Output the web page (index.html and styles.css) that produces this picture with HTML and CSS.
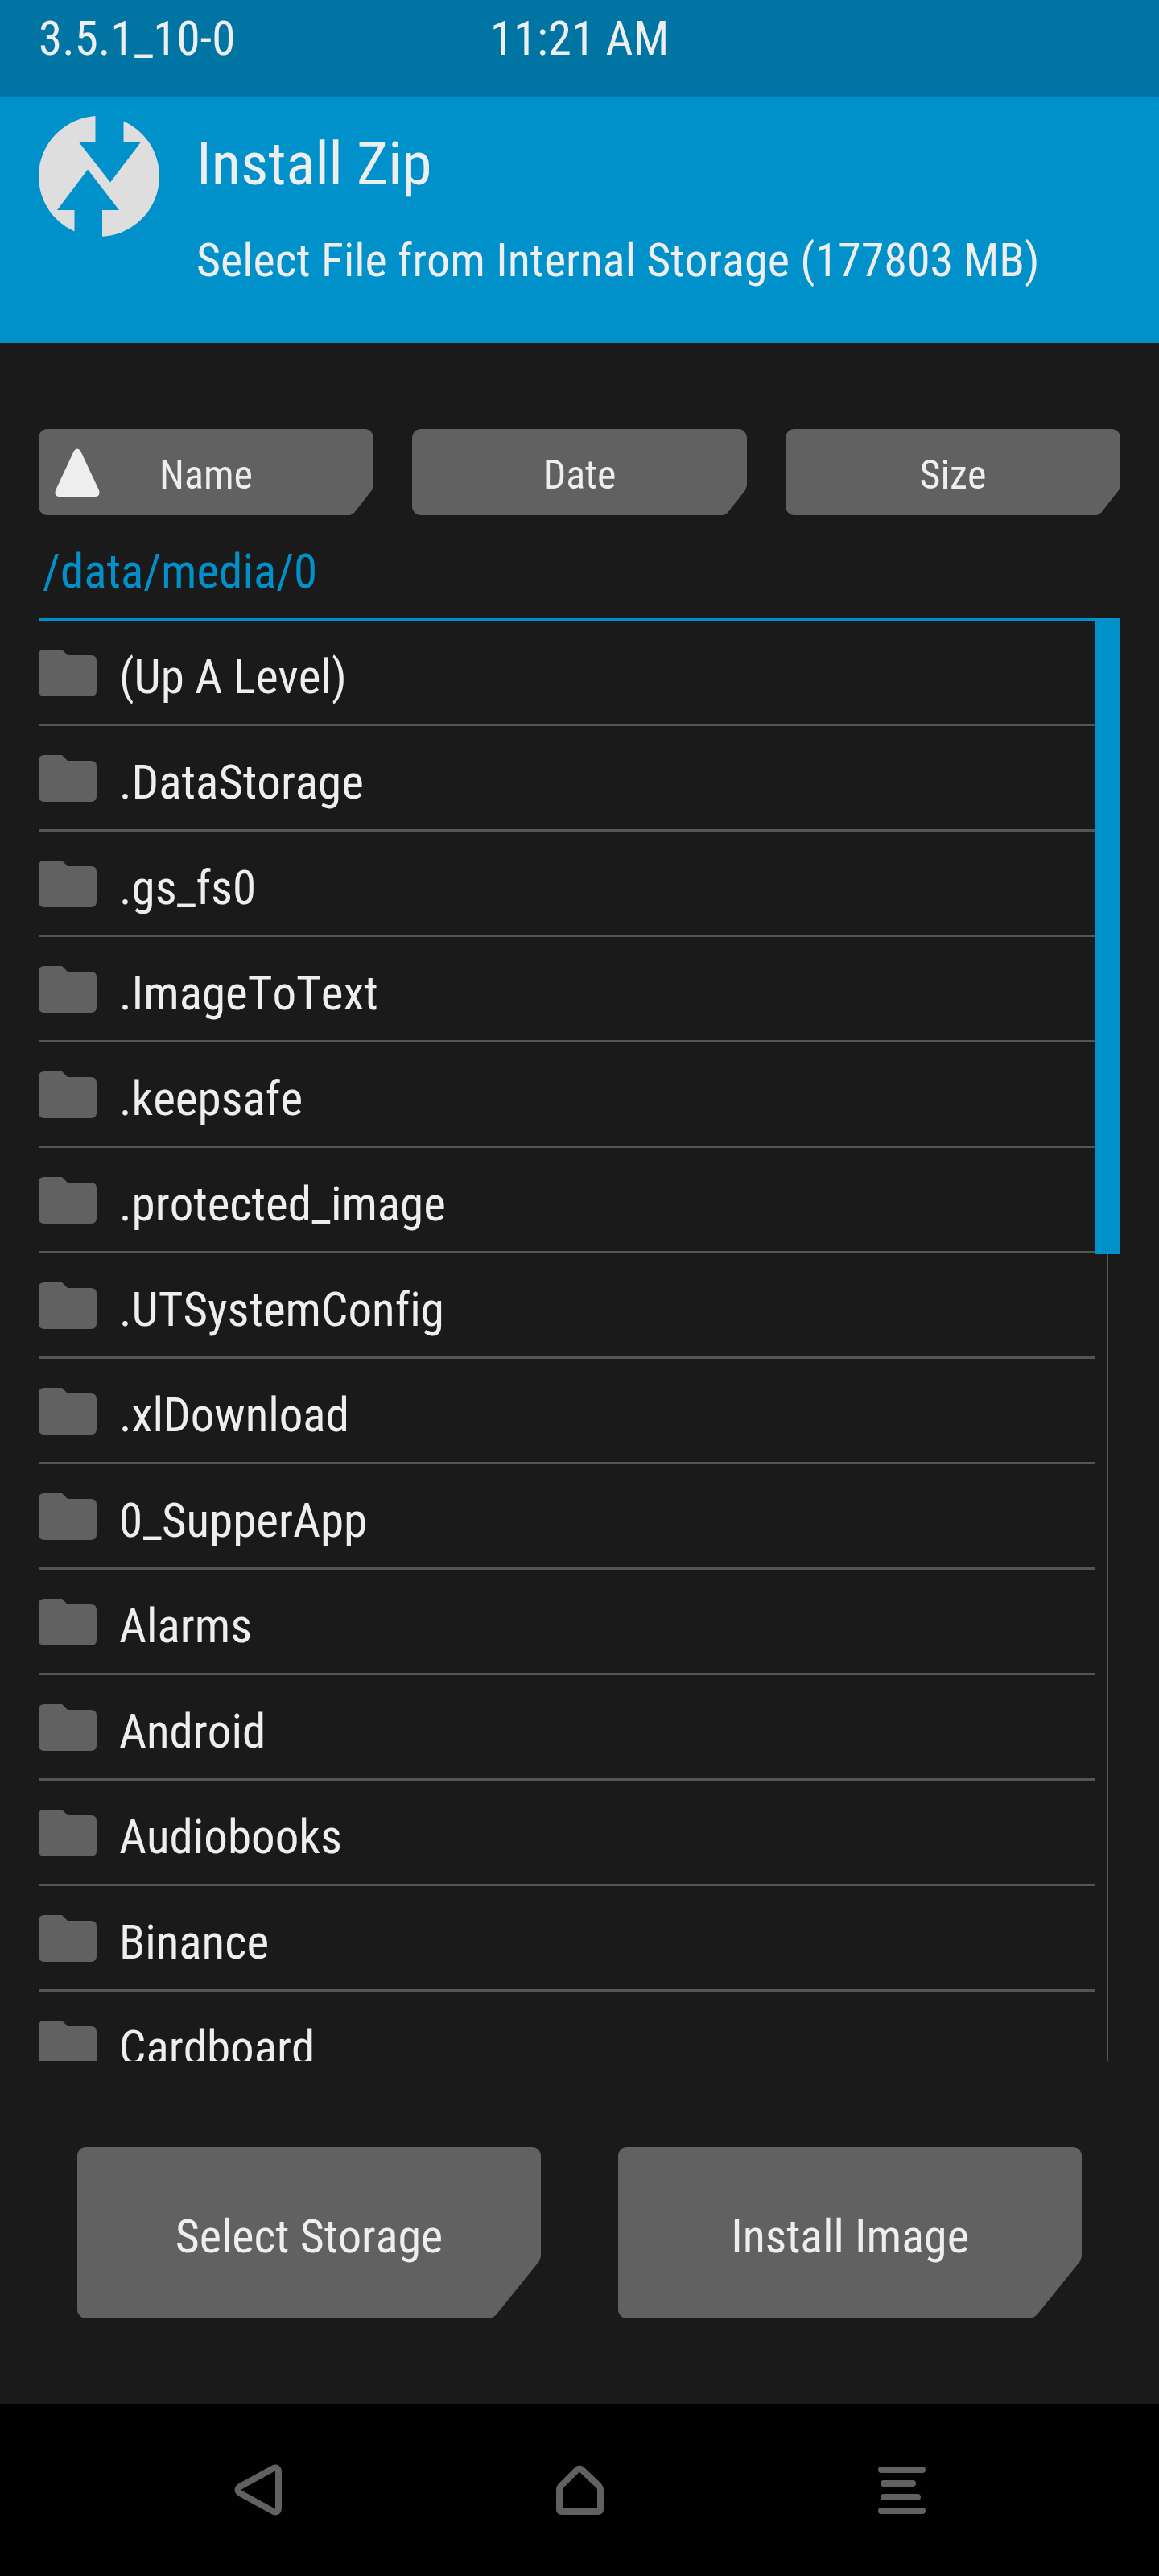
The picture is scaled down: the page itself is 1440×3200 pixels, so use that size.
FILE: index.html
```
<!DOCTYPE html>
<html lang="en">
<head>
    <meta charset="UTF-8" />
    <meta name="viewport" content="width=device-width, initial-scale=1.0" />
    <title>Install Zip</title>
    <link rel="stylesheet" href="styles.css">
</head>
<body>
    <!-- Shared folder icon -->
    <svg class="sprite" aria-hidden="true">
        <symbol id="folder" viewBox="0 0 72 58">
            <path d="M7 0H29L36 7H65Q72 7 72 14V51Q72 58 65 58H7Q0 58 0 51V7Q0 0 7 0Z" />
        </symbol>
    </svg>

    <div class="status-bar">
        <span>3.5.1_10-0</span>
        <span class="clock">11:21 AM</span>
        <span></span>
    </div>

    <header class="header">
        <svg class="logo" viewBox="0 0 150 150" aria-hidden="true">
            <circle class="logo-disc" cx="75" cy="75" r="75" />
            <path class="logo-arrow" d="M70.500 -2V32.500H50L89 82.500L127 32.500H105.500V-2Z" />
            <path class="logo-arrow" d="M44.500 152V117H23L61 66.500L100 117H79V152Z" />
        </svg>
        <div class="header-text">
            <h1>Install Zip</h1>
            <p>Select File from Internal Storage (177803 MB)</p>
        </div>
    </header>

    <main class="content">
        <div class="sort-bar">
            <button class="btn btn-sort" type="button">
                <svg class="sort-arrow" viewBox="0 0 56 60" aria-hidden="true">
                    <path d="M24 3Q28 -2 32 3L55 52Q57 59 51 60H5Q-1 59 1 52Z" />
                </svg>
                Name
            </button>
            <button class="btn btn-sort" type="button">Date</button>
            <button class="btn btn-sort" type="button">Size</button>
        </div>

        <div class="path">/data/media/0</div>

        <div class="browser">
            <ul class="file-list">
                <li><a href="#"><svg class="folder"><use href="#folder" /></svg><span>(Up A Level)</span></a></li>
                <li><a href="#"><svg class="folder"><use href="#folder" /></svg><span>.DataStorage</span></a></li>
                <li><a href="#"><svg class="folder"><use href="#folder" /></svg><span>.gs_fs0</span></a></li>
                <li><a href="#"><svg class="folder"><use href="#folder" /></svg><span>.ImageToText</span></a></li>
                <li><a href="#"><svg class="folder"><use href="#folder" /></svg><span>.keepsafe</span></a></li>
                <li><a href="#"><svg class="folder"><use href="#folder" /></svg><span>.protected_image</span></a></li>
                <li><a href="#"><svg class="folder"><use href="#folder" /></svg><span>.UTSystemConfig</span></a></li>
                <li><a href="#"><svg class="folder"><use href="#folder" /></svg><span>.xlDownload</span></a></li>
                <li><a href="#"><svg class="folder"><use href="#folder" /></svg><span>0_SupperApp</span></a></li>
                <li><a href="#"><svg class="folder"><use href="#folder" /></svg><span>Alarms</span></a></li>
                <li><a href="#"><svg class="folder"><use href="#folder" /></svg><span>Android</span></a></li>
                <li><a href="#"><svg class="folder"><use href="#folder" /></svg><span>Audiobooks</span></a></li>
                <li><a href="#"><svg class="folder"><use href="#folder" /></svg><span>Binance</span></a></li>
                <li><a href="#"><svg class="folder"><use href="#folder" /></svg><span>Cardboard</span></a></li>
            </ul>
            <div class="scrollbar">
                <div class="thumb"></div>
                <div class="track"></div>
            </div>
        </div>

        <div class="actions">
            <button class="btn btn-action" type="button">Select Storage</button>
            <button class="btn btn-action" type="button">Install Image</button>
        </div>
    </main>

    <nav class="nav-bar">
        <button type="button" aria-label="Back">
            <svg viewBox="0 0 64 64">
                <path d="M52 5Q58 3 58 10V54Q58 61 52 59L10 36Q5 32 10 28Z" />
            </svg>
        </button>
        <button type="button" aria-label="Home">
            <svg viewBox="0 0 64 64">
                <path d="M29 7Q32 4 35 7L56 27Q58 29 58 32V56Q58 59 55 59H10Q7 59 7 56V32Q7 29 9 27Z" />
            </svg>
        </button>
        <button type="button" aria-label="Menu">
            <svg viewBox="0 0 64 64">
                <path d="M7 7H58M10 24H46M10 41H52M7 58H58" />
            </svg>
        </button>
    </nav>
</body>
</html>
```
FILE: styles.css
```
* {
    box-sizing: border-box;
}

body {
    display: flex;
    flex-direction: column;
    height: 100vh;
    margin: 0;
    background-color: #1a1a1a;
    color: #eee;
    font-family: "Roboto Condensed", Roboto, sans-serif;
    font-size: 59px;
    font-kerning: none;
    font-variant-ligatures: none;
    line-height: 72px;
}

h1, p, ul {
    margin: 0;
    padding: 0;
}

button {
    border: none;
    color: inherit;
    font-family: inherit;
    font-kerning: none;
    cursor: pointer;
}

.sprite {
    display: none;
}

.status-bar {
    display: grid;
    grid-template-columns: 1fr auto 1fr;
    height: 120px;
    padding: 12px 48px;
    background-color: #0075a4;
}

.header {
    display: flex;
    gap: 46px;
    height: 306px;
    padding: 24px 48px;
    background-color: #0090ca;
}

.logo {
    width: 150px;
    height: 150px;
    flex: none;
}

.logo-disc {
    fill: #dedede;
}

.logo-arrow {
    fill: #0090ca;
}

.header-text {
    padding-top: 15px;
}

.header h1 {
    font-size: 75px;
    font-weight: normal;
    line-height: 88px;
}

.header p {
    margin-top: 40px;
    font-size: 58px;
}

.content {
    display: flex;
    flex-direction: column;
    flex: 1;
    min-height: 0;
    padding: 107px 48px 106px;
}

.sort-bar {
    display: grid;
    grid-template-columns: repeat(3, 1fr);
    gap: 48px;
}

.btn {
    position: relative;
    background-color: #616161;
    border-radius: 11px;
}

/* bottom right corner is cut off */
.btn-sort {
    height: 107px;
    padding: 6px 0 0;
    font-size: 50px;
    clip-path: polygon(0 0, 100% 0, 100% calc(100% - 37px), calc(100% - 2px) calc(100% - 31px), calc(100% - 24px) calc(100% - 3px), calc(100% - 29px) 100%, 0 100%);
}

.btn-action {
    height: 213px;
    padding: 8px 0 0;
    font-size: 58px;
    clip-path: polygon(0 0, 100% 0, 100% calc(100% - 77px), calc(100% - 2px) calc(100% - 71px), calc(100% - 56px) calc(100% - 4px), calc(100% - 62px) 100%, 0 100%);
}

.sort-arrow {
    position: absolute;
    left: 20px;
    top: 24px;
    width: 56px;
    height: 60px;
    fill: #eee;
}

.path {
    height: 131px;
    padding: 34px 5px 0;
    border-bottom: 3px solid #0090ca;
    color: #0090ca;
}

.browser {
    display: flex;
    flex: 1;
    min-height: 0;
}

.file-list {
    flex: 1;
    overflow: hidden;
    list-style: none;
}

.file-list a {
    display: flex;
    align-items: center;
    gap: 28px;
    height: 131px;
    border-bottom: 3px solid #555;
    color: inherit;
    text-decoration: none;
}

.file-list span {
    padding-top: 11px;
}

.folder {
    width: 72px;
    height: 58px;
    margin-top: 2px;
    fill: #616161;
}

.scrollbar {
    display: flex;
    flex-direction: column;
    align-items: center;
    width: 32px;
}

.thumb {
    width: 100%;
    height: 44%;
    background-color: #0090ca;
}

.track {
    width: 2px;
    flex: 1;
    background-color: #555;
}

.actions {
    display: grid;
    grid-template-columns: repeat(2, 1fr);
    gap: 96px;
    padding: 107px 48px 0;
}

.nav-bar {
    display: grid;
    grid-template-columns: repeat(3, 1fr);
    height: 214px;
    padding: 0 120px;
    background-color: #000;
}

.nav-bar button {
    display: flex;
    align-items: center;
    justify-content: center;
    background: none;
}

.nav-bar svg {
    width: 64px;
    height: 64px;
    fill: none;
    stroke: #616161;
    stroke-width: 8px;
    stroke-linecap: round;
    stroke-linejoin: round;
}
```
